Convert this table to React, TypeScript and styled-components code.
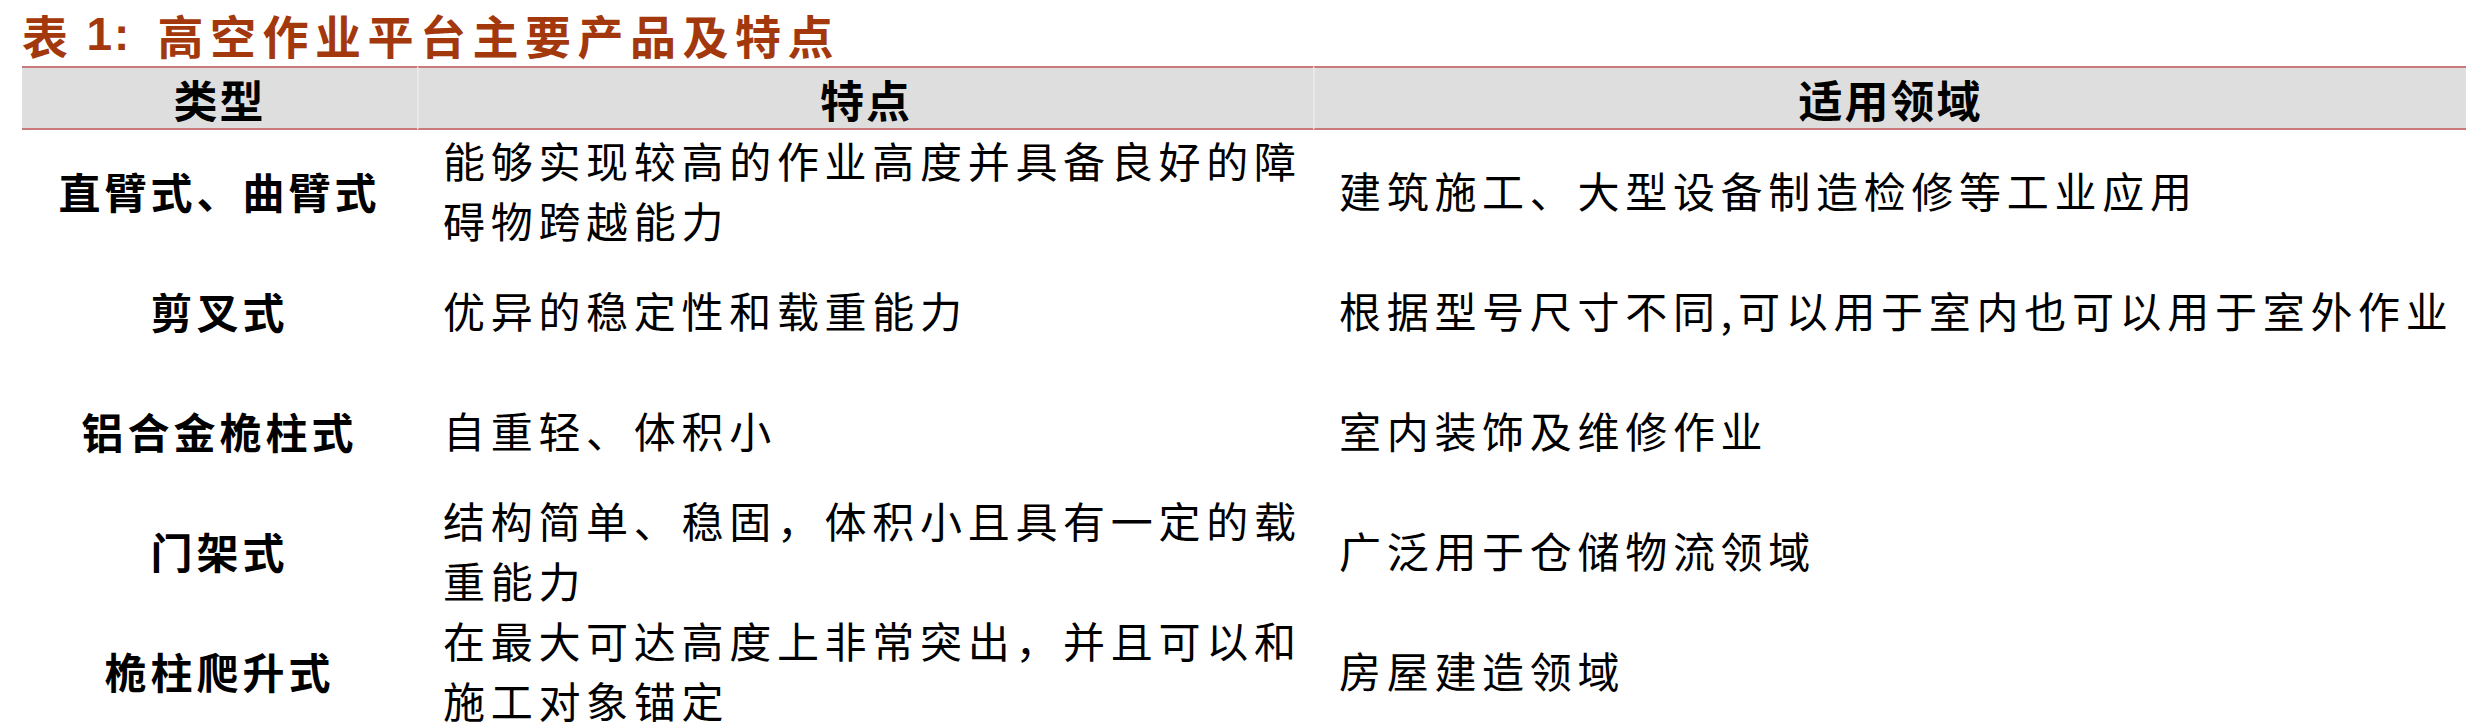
import React from "react";
import styled, { createGlobalStyle } from "styled-components";

const GlobalStyle = createGlobalStyle`
  html, body {
    margin: 0;
    padding: 0;
    background: #ffffff;
  }
  body {
    font-family: "Noto Sans CJK SC", "Noto Sans", sans-serif;
    color: #000;
  }
`;

const Page = styled.div`
  width: 2466px;
  height: 724px;
  overflow: hidden;
  display: flex;
  flex-direction: column;
`;

const Title = styled.h1`
  margin: 0;
  height: 66px;
  padding: 2px 0 0 22px;
  box-sizing: border-box;
  display: flex;
  align-items: center;
  font-family: "Noto Sans CJK SC", sans-serif;
  font-size: 46px;
  font-weight: 700;
  letter-spacing: 6.5px;
  color: #a3380c;
  white-space: nowrap;
`;

const Num = styled.span`
  font-family: "Liberation Sans", "Noto Sans", sans-serif;
  font-weight: 700;
  margin: 0 26px 0 12px;
  letter-spacing: 2px;
`;

const Table = styled.div`
  margin-left: 22px;
  display: grid;
  grid-template-columns: 395px 896px 1fr;
  grid-template-rows: 64px;
  grid-auto-rows: 120px;
`;

const HeadCell = styled.div<{ $first?: boolean }>`
  height: 64px;
  box-sizing: border-box;
  background: #dedede;
  border-top: 2px solid #c97a7a;
  border-bottom: 2px solid #c97a7a;
  border-left: ${(p) => (p.$first ? "none" : "2px solid #e8e8e8")};
  display: flex;
  align-items: center;
  justify-content: center;
  font-size: 44px;
  font-weight: 700;
  letter-spacing: 2px;
  line-height: 1;
  padding-top: 2px;
`;

const TypeCell = styled.div`
  display: flex;
  align-items: center;
  justify-content: center;
  font-size: 42px;
  font-weight: 700;
  letter-spacing: 4px;
  white-space: nowrap;
`;

const TextCell = styled.div`
  display: flex;
  flex-direction: column;
  justify-content: center;
  padding-left: 26px;
  font-size: 42px;
  font-weight: 400;
  letter-spacing: 5.7px;
  line-height: 60px;
  white-space: nowrap;
`;

const Line = styled.span`
  display: block;
`;

type Row = { type: string; feature: string[]; field: string[] };

const rows: Row[] = [
  {
    type: "直臂式、曲臂式",
    feature: ["能够实现较高的作业高度并具备良好的障", "碍物跨越能力"],
    field: ["建筑施工、大型设备制造检修等工业应用"],
  },
  {
    type: "剪叉式",
    feature: ["优异的稳定性和载重能力"],
    field: ["根据型号尺寸不同,可以用于室内也可以用于室外作业"],
  },
  {
    type: "铝合金桅柱式",
    feature: ["自重轻、体积小"],
    field: ["室内装饰及维修作业"],
  },
  {
    type: "门架式",
    feature: ["结构简单、稳固，体积小且具有一定的载", "重能力"],
    field: ["广泛用于仓储物流领域"],
  },
  {
    type: "桅柱爬升式",
    feature: ["在最大可达高度上非常突出，并且可以和", "施工对象锚定"],
    field: ["房屋建造领域"],
  },
];

export default function App() {
  return (
    <>
      <GlobalStyle />
      <Page>
        <Title>
          表<Num>1:</Num>高空作业平台主要产品及特点
        </Title>
        <Table>
          <HeadCell $first>类型</HeadCell>
          <HeadCell>特点</HeadCell>
          <HeadCell>适用领域</HeadCell>
          {rows.map((r) => (
            <React.Fragment key={r.type}>
              <TypeCell>{r.type}</TypeCell>
              <TextCell>
                {r.feature.map((l) => (
                  <Line key={l}>{l}</Line>
                ))}
              </TextCell>
              <TextCell>
                {r.field.map((l) => (
                  <Line key={l}>{l}</Line>
                ))}
              </TextCell>
            </React.Fragment>
          ))}
        </Table>
      </Page>
    </>
  );
}
